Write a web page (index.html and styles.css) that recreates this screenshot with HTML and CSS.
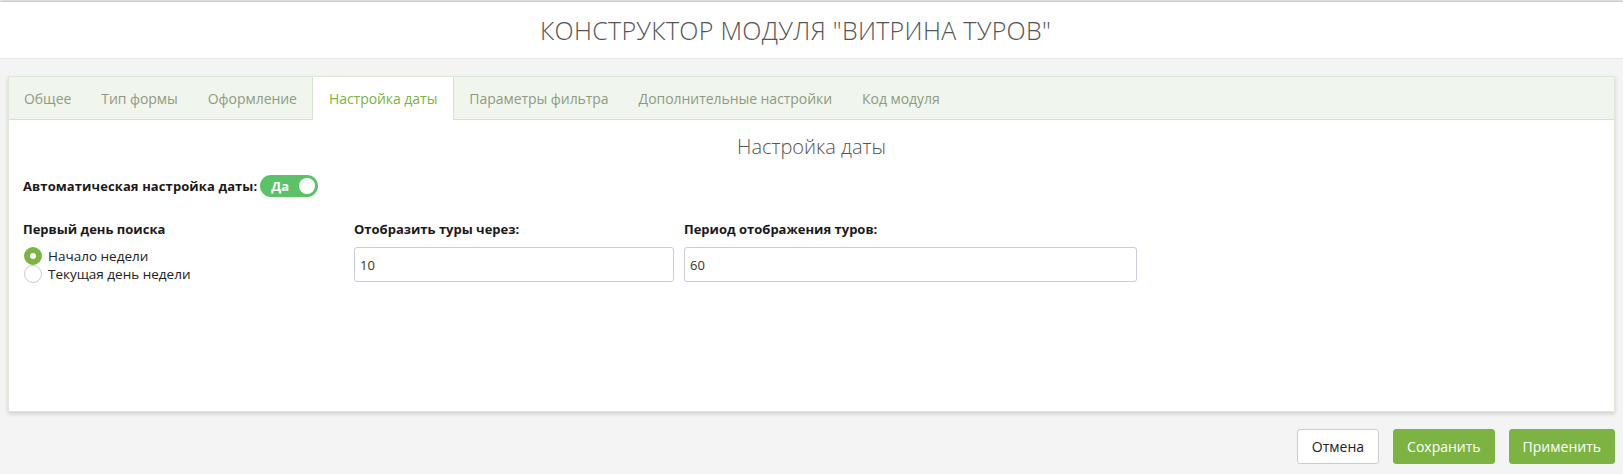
FILE: index.html
```html
<!DOCTYPE html>
<html lang="ru">
  <head>
    <meta charset="UTF-8" />
    <meta name="viewport" content="width=device-width, initial-scale=1.0" />
    <title>Конструктор модуля</title>
    <link rel="stylesheet" href="styles.css">
  </head>
  <body>
    <header class="page-head">
      <h1>Конструктор модуля "Витрина туров"</h1>
    </header>

    <div class="wrap">
      <div class="card">
        <nav class="tabs">
          <a class="tab">Общее</a>
          <a class="tab">Тип формы</a>
          <a class="tab">Оформление</a>
          <a class="tab active">Настройка даты</a>
          <a class="tab">Параметры фильтра</a>
          <a class="tab">Дополнительные настройки</a>
          <a class="tab">Код модуля</a>
        </nav>

        <section class="pane">
          <h2>Настройка даты</h2>

          <div class="auto-row">
            <span class="label">Автоматическая настройка даты:</span>
            <span class="toggle"><span class="toggle-text">Да</span><span class="knob"></span></span>
          </div>

          <div class="fields">
            <div class="field first">
              <div class="label">Первый день поиска</div>
              <label class="radio checked"><span class="dot"></span>Начало недели</label>
              <label class="radio"><span class="dot"></span>Текущая день недели</label>
            </div>
            <div class="field second">
              <div class="label">Отобразить туры через:</div>
              <input type="text" value="10" />
            </div>
            <div class="field third">
              <div class="label">Период отображения туров:</div>
              <input type="text" value="60" />
            </div>
          </div>
        </section>
      </div>

      <div class="actions">
        <button class="btn">Отмена</button>
        <button class="btn green">Сохранить</button>
        <button class="btn green">Применить</button>
      </div>
    </div>
  </body>
</html>
```

FILE: styles.css
```css
body {
  margin: 0;
  background: #f4f4f4;
  font-family: "Open Sans", "Noto Sans", sans-serif;
  color: #222;
}

.page-head {
  background: #fff;
  height: 56px;
  margin-top: 2px;
  padding-right: 32px;
  box-shadow: 0 -1px 3px rgba(0, 0, 0, 0.25);
  display: flex;
  align-items: center;
  justify-content: center;
}

.page-head h1 {
  margin: 0;
  font-size: 25px;
  font-weight: 300;
  color: #555;
  text-transform: uppercase;
  letter-spacing: 0.3px;
}

.wrap {
  padding: 18px 8px 0 8px;
}

.card {
  background: #fff;
  border: 1px solid #dfe6da;
  box-shadow: 0 2px 4px rgba(0, 0, 0, 0.15);
  height: 336px;
  box-sizing: border-box;
}

.tabs {
  display: flex;
  background: #f0f5ee;
  border-bottom: 1px solid #d6e2d0;
  height: 42px;
}

.tab {
  padding: 0 15px;
  font-size: 14px;
  letter-spacing: -0.05px;
  color: #8f9b80;
  display: flex;
  align-items: center;
  height: 42px;
}

.tab.active {
  background: #fff;
  color: #7cb342;
  border-left: 1px solid #d6e2d0;
  border-right: 1px solid #d6e2d0;
  height: 43px;
  padding: 0 16px;
}

.pane {
  padding: 0 14px;
}

.pane h2 {
  margin: 13px 0 0 0;
  text-align: center;
  font-size: 20px;
  font-weight: 300;
  color: #555;
}

.label {
  font-size: 13px;
  font-weight: 700;
  color: #1a1a1a;
}

.auto-row {
  display: flex;
  align-items: center;
  margin-top: 15px;
}

.auto-row .label {
  letter-spacing: 0.1px;
}

.toggle {
  margin-left: 3px;
  width: 58px;
  height: 22px;
  border-radius: 11px;
  background: #5cc26a;
  display: flex;
  align-items: center;
  justify-content: space-between;
  padding: 0 3px 0 11px;
  box-sizing: border-box;
}

.toggle-text {
  color: #fff;
  font-size: 13px;
  font-weight: 700;
}

.knob {
  width: 16px;
  height: 16px;
  border-radius: 50%;
  background: #fff;
}

.fields {
  display: flex;
  gap: 10px;
  margin-top: 23px;
}

.field .label {
  margin-bottom: 9px;
}

.field.first {
  width: 321px;
}

.field.second {
  width: 320px;
}

.field.third {
  width: 453px;
}

.radio {
  display: flex;
  align-items: center;
  font-size: 13.5px;
  color: #222;
  height: 19px;
  gap: 6px;
  margin-left: 1px;
  margin-top: -1px;
}

.dot {
  width: 18px;
  height: 18px;
  border-radius: 50%;
  border: 1px solid #c9ccd8;
  box-sizing: border-box;
  background: #fff;
}

.radio.checked .dot {
  border: 6px solid #7cb342;
}

.field input {
  width: 100%;
  height: 35px;
  box-sizing: border-box;
  border: 1px solid #c9ccdc;
  border-radius: 3px;
  padding: 0 5px;
  font-family: inherit;
  font-size: 13px;
  color: #333;
}

.actions {
  display: flex;
  justify-content: flex-end;
  gap: 14px;
  margin-top: 17px;
}

.btn {
  height: 35px;
  border-radius: 3px;
  border: 1px solid #ccc;
  background: #fff;
  font-family: inherit;
  font-size: 14px;
  color: #222;
  padding: 0 14px;
}

.btn.green {
  background: #7cb342;
  border-color: #7cb342;
  color: #fff;
  padding: 0 13px;
}
```
